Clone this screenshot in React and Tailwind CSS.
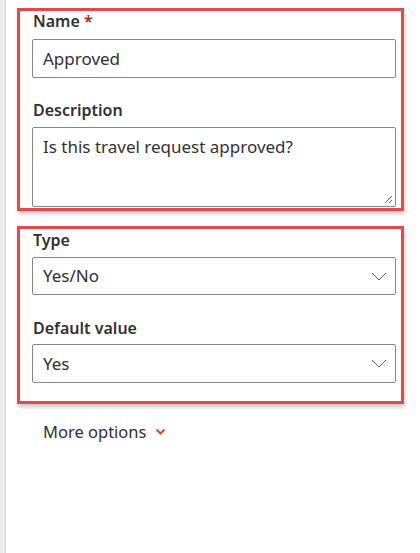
export default function App() {
  const font = { fontFamily: '"Noto Sans", "Open Sans", sans-serif' };
  return (
    <div className="flex h-[553px] w-[420px] bg-white text-[#323130]" style={font}>
      <div className="w-[6px] shrink-0 border-r border-[#d2d2d2] bg-[#ececec]" />
      <div className="flex flex-1 flex-col pl-[11px] pt-[8px]">
        {/* Box 1 */}
        <div className="flex w-[387px] flex-col border-[3px] border-[#e24a4c] pb-[1px] pl-[12px] pr-[5px] shadow-[1px_3px_4px_rgba(0,0,0,0.22)]">
          <div className="pl-[1px] text-[16px] font-semibold leading-[20px]">
            Name <span className="text-[#a4262c]">*</span>
          </div>
          <div className="mt-[8px] flex h-[39px] items-center rounded-[2px] border border-[#8a8886] px-[10px] text-[17px]">
            Approved
          </div>
          <div className="mt-[22px] pl-[1px] text-[16px] font-semibold leading-[20px]">Description</div>
          <div className="relative mt-[7px] h-[80px] rounded-[2px] border border-[#8a8886] px-[10px] pt-[7px] text-[17px] leading-[24px]">
            Is this travel request approved?
            <svg className="absolute bottom-[2px] right-[2px]" width="9" height="9" viewBox="0 0 9 9">
              <line x1="1" y1="8" x2="8" y2="1" stroke="#605e5c" strokeWidth="1" />
              <line x1="5" y1="8" x2="8" y2="5" stroke="#605e5c" strokeWidth="1" />
            </svg>
          </div>
        </div>

        {/* Box 2 */}
        <div className="mt-[15px] flex w-[387px] flex-col border-[3px] border-[#e24a4c] pb-[18px] pl-[12px] pr-[5px] shadow-[1px_3px_4px_rgba(0,0,0,0.22)]">
          <div className="mt-[1px] pl-[1px] text-[16px] font-semibold leading-[20px]">Type</div>
          <div className="mt-[7px] flex h-[38px] items-center justify-between rounded-[2px] border border-[#8a8886] pl-[10px] pr-[8px] text-[17px]">
            <span>Yes/No</span>
            <svg width="16" height="9" viewBox="0 0 16 9" fill="none">
              <path d="M1 1 L8 8 L15 1" stroke="#605e5c" strokeWidth="1" />
            </svg>
          </div>
          <div className="mt-[23px] pl-[1px] text-[16px] font-semibold leading-[20px]">Default value</div>
          <div className="mt-[6px] flex h-[39px] items-center justify-between rounded-[2px] border border-[#8a8886] pl-[10px] pr-[8px] text-[17px]">
            <span>Yes</span>
            <svg width="16" height="9" viewBox="0 0 16 9" fill="none">
              <path d="M1 1 L8 8 L15 1" stroke="#605e5c" strokeWidth="1" />
            </svg>
          </div>
        </div>

        <div className="mt-[16px] flex items-center gap-[9px] pl-[26px] text-[16.5px] leading-[24px]">
          <span>More options</span>
          <svg width="11" height="8" viewBox="0 0 11 8" fill="none">
            <path d="M1.5 1.5 L5.5 5.5 L9.5 1.5" stroke="#c8501e" strokeWidth="2" />
          </svg>
        </div>
      </div>
    </div>
  );
}
